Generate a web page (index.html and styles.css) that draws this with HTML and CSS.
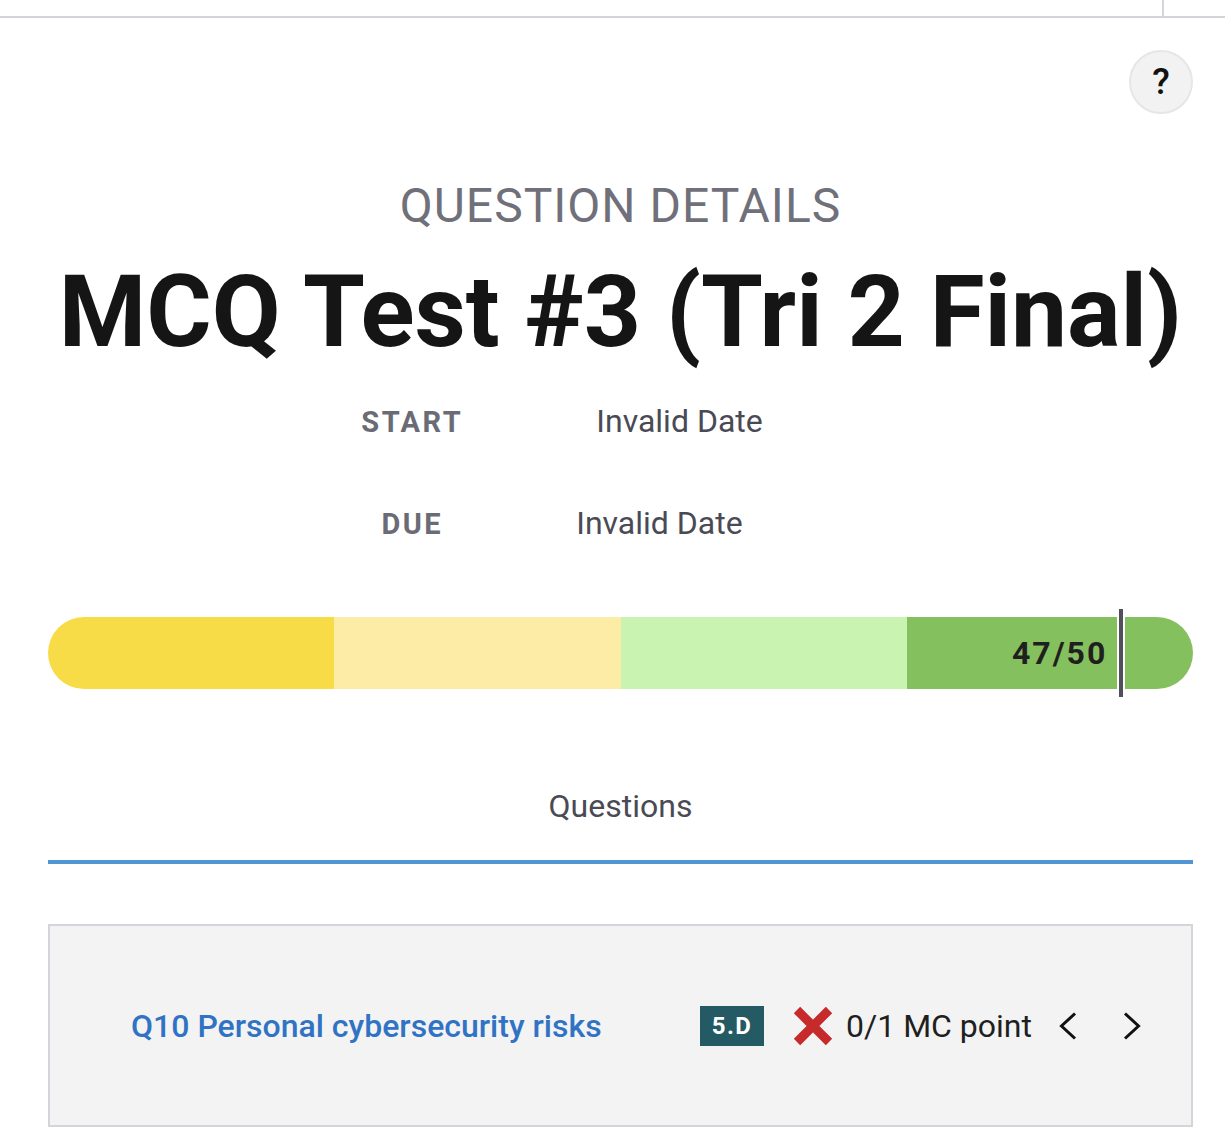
FILE: index.html
```html
<!DOCTYPE html>
<html lang="en">
<head>
<meta charset="utf-8">
<title>Question Details</title>
<link rel="stylesheet" href="styles.css">
</head>
<body>
<header class="topbar">
  <div class="topbar-tab"></div>
</header>
<main class="page">
  <div class="help-row">
    <button class="help-btn" type="button">?</button>
  </div>
  <div class="eyebrow">QUESTION DETAILS</div>
  <h1 class="title">MCQ Test #3 (Tri 2 Final)</h1>
  <div class="dates">
    <div class="date-row">
      <span class="date-label">START</span>
      <span class="date-value">Invalid Date</span>
    </div>
    <div class="date-row">
      <span class="date-label">DUE</span>
      <span class="date-value">Invalid Date</span>
    </div>
  </div>
  <div class="bar-wrap">
    <div class="bar">
      <div class="seg seg-1"></div>
      <div class="seg seg-2"></div>
      <div class="seg seg-3"></div>
      <div class="seg seg-4"></div>
    </div>
    <div class="marker" style="left: 94%;">
      <span class="score">47/50</span>
    </div>
  </div>
  <div class="tabs">
    <div class="tab">Questions</div>
  </div>
  <section class="card">
    <a class="q-title" href="#">Q10 Personal cybersecurity risks</a>
    <span class="badge">5.D</span>
    <svg class="icon-x" width="40" height="40" viewBox="0 0 40 40" aria-hidden="true">
      <path d="M4 4 L36 36 M36 4 L4 36" stroke="#c62a2a" stroke-width="9" fill="none"/>
    </svg>
    <span class="points">0/1 MC point</span>
    <svg class="chev chev-left" width="18" height="28" viewBox="0 0 18 28" aria-hidden="true">
      <path d="M16 1.5 L2.5 14 L16 26.5" stroke="#111" stroke-width="3" fill="none"/>
    </svg>
    <svg class="chev chev-right" width="18" height="28" viewBox="0 0 18 28" aria-hidden="true">
      <path d="M2 1.5 L15.5 14 L2 26.5" stroke="#111" stroke-width="3" fill="none"/>
    </svg>
  </section>
</main>
</body>
</html>
```
FILE: styles.css
```css
* { box-sizing: border-box; }

html, body {
  margin: 0;
  padding: 0;
  background: #ffffff;
  font-family: Roboto, "Noto Sans", "Liberation Sans", sans-serif;
  color: #222;
}

.topbar {
  height: 18px;
  border-bottom: 2px solid #d4d4da;
  display: flex;
  justify-content: flex-end;
}

.topbar-tab {
  width: 63px;
  border-left: 2px solid #d4d4da;
}

.page {
  padding: 0 32px 0 48px;
}

.help-row {
  display: flex;
  justify-content: flex-end;
  margin-top: 32px;
}

.help-btn {
  width: 64px;
  height: 64px;
  border-radius: 50%;
  border: 2px solid #e6e6e6;
  background: #f2f2f2;
  font-family: Roboto, sans-serif;
  font-size: 36px;
  font-weight: 500;
  color: #111;
  line-height: 1;
  padding: 0;
  display: flex;
  align-items: center;
  justify-content: center;
}

.eyebrow {
  margin-top: 64px;
  text-align: center;
  font-size: 48px;
  line-height: 56px;
  letter-spacing: 1px;
  color: #70707a;
}

.title {
  margin: 20px 0 0;
  text-align: center;
  font-size: 100px;
  line-height: 116px;
  font-weight: 700;
  color: #151515;
}

.dates {
  margin-top: 31px;
  padding-right: 117px;
  display: flex;
  flex-direction: column;
  gap: 62px;
}

.date-row {
  display: flex;
  justify-content: center;
  align-items: baseline;
  gap: 133px;
  height: 40px;
}

.date-label {
  font-size: 29px;
  font-weight: 700;
  letter-spacing: 2.5px;
  color: #6b6b75;
  line-height: 40px;
}

.date-value {
  font-size: 32px;
  line-height: 40px;
  color: #4a4a55;
}

.bar-wrap {
  position: relative;
  margin-top: 74px;
  height: 72px;
}

.bar {
  display: flex;
  height: 72px;
  border-radius: 36px;
  overflow: hidden;
}

.seg { flex: 1; }
.seg-1 { background: #f7dc48; }
.seg-2 { background: #fdeca6; }
.seg-3 { background: #c9f3b1; }
.seg-4 { background: #85c05e; }

.marker {
  position: absolute;
  top: -8px;
  bottom: -8px;
  width: 8px;
  margin-left: -7px;
  background: #50505a;
  background-clip: content-box;
  border-left: 2px solid #fff;
  border-right: 2px solid #fff;
}

.score {
  position: absolute;
  right: calc(100% + 12px);
  top: 50%;
  transform: translateY(-50%);
  font-size: 32px;
  font-weight: 700;
  letter-spacing: 2px;
  color: #1f1f1f;
  line-height: 40px;
  white-space: nowrap;
}

.tabs {
  margin-top: 97px;
  border-bottom: 4px solid #5196d2;
}

.tab {
  text-align: center;
  font-size: 32px;
  line-height: 40px;
  color: #4a4a55;
  padding-bottom: 34px;
}

.card {
  margin-top: 60px;
  background: #f3f3f3;
  border: 2px solid #d4d4da;
  padding: 80px 50px 79px 81px;
  display: flex;
  align-items: center;
  height: 203px;
}

.q-title {
  margin-right: auto;
  font-size: 32px;
  line-height: 40px;
  font-weight: 500;
  color: #3073c4;
  text-decoration: none;
}

.badge {
  width: 64px;
  height: 40px;
  background: #235a63;
  color: #fff;
  font-size: 24px;
  font-weight: 700;
  letter-spacing: 1.5px;
  display: flex;
  align-items: center;
  justify-content: center;
  margin-right: 29px;
}

.icon-x {
  display: block;
  margin-right: 13px;
}

.points {
  font-size: 32px;
  line-height: 40px;
  color: #1f1f1f;
  margin-right: 27px;
}

.chev { display: block; }
.chev-left { margin-right: 46px; }
```
